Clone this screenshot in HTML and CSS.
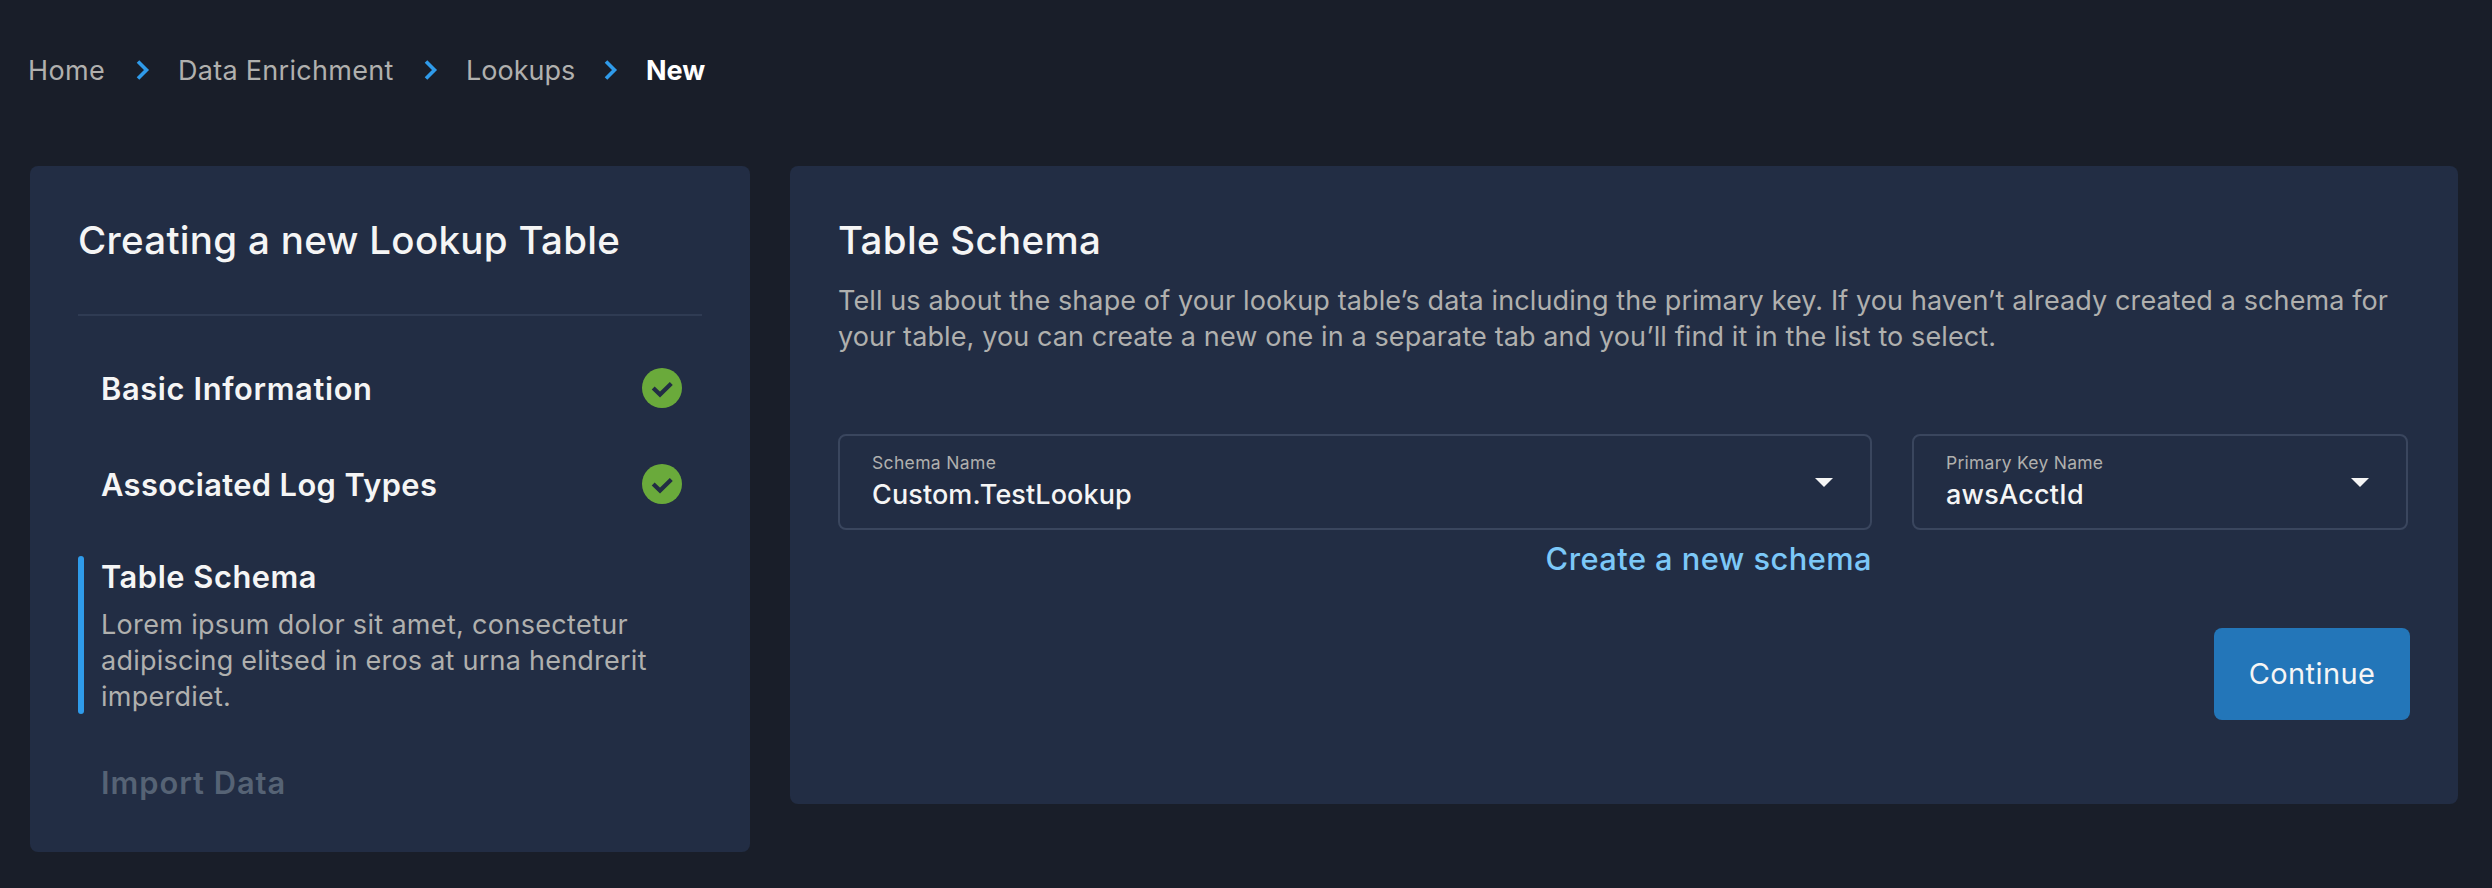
FILE: index.html
```
<!DOCTYPE html>
<html lang="en">
<head>
<meta charset="utf-8">
<title>New Lookup Table</title>
<link rel="stylesheet" href="styles.css">
</head>
<body>
<nav class="breadcrumbs">
  <a class="crumb crumb-home">Home</a>
  <svg class="chevron" viewBox="0 0 14 20"><path d="M2 1.500 10.500 10 2 18.500"/></svg>
  <a class="crumb crumb-enrichment">Data Enrichment</a>
  <svg class="chevron" viewBox="0 0 14 20"><path d="M2 1.500 10.500 10 2 18.500"/></svg>
  <a class="crumb crumb-lookups">Lookups</a>
  <svg class="chevron" viewBox="0 0 14 20"><path d="M2 1.500 10.500 10 2 18.500"/></svg>
  <span class="crumb crumb-current">New</span>
</nav>
<main class="layout">
  <aside class="card wizard">
    <h1 class="title wizard-title">Creating a new Lookup Table</h1>
    <ol class="steps">
      <li class="step done"><span class="step-name basic">Basic Information</span>
        <svg class="check" viewBox="0 0 40 40"><circle cx="20" cy="20" r="20"/><path d="M11.200 20 18 26.500 29.300 15.500"/></svg></li>
      <li class="step done"><span class="step-name assoc">Associated Log Types</span>
        <svg class="check" viewBox="0 0 40 40"><circle cx="20" cy="20" r="20"/><path d="M11.200 20 18 26.500 29.300 15.500"/></svg></li>
      <li class="step active">
        <span class="step-name schema">Table Schema</span>
        <p class="body step-text"><span class="wide">Lorem ipsum dolor sit amet, consectetur</span><br>adipiscing elitsed in eros at urna hendrerit<br>imperdiet.</p>
      </li>
      <li class="step pending"><span class="step-name import">Import Data</span></li>
    </ol>
  </aside>
  <section class="card panel">
    <h2 class="title panel-title">Table Schema</h2>
    <p class="body panel-text">Tell us about the shape of your lookup table’s data including the primary key. If you haven’t already created a schema for<br>your table, you can create a new one in a separate tab and you’ll find it in the list to select.</p>
    <div class="fields">
      <div class="field-group">
        <div class="select">
          <div class="select-text"><span class="label">Schema Name</span><span class="value">Custom.TestLookup</span></div>
          <svg class="caret" viewBox="0 0 18 9"><path d="M0 0H18L9 9Z"/></svg>
        </div>
        <a class="link">Create a new schema</a>
      </div>
      <div class="select key-select">
        <div class="select-text"><span class="label key-label">Primary Key Name</span><span class="value key-value">awsAcctId</span></div>
        <svg class="caret" viewBox="0 0 18 9"><path d="M0 0H18L9 9Z"/></svg>
      </div>
    </div>
    <button class="continue">Continue</button>
  </section>
</main>
</body>
</html>
```
FILE: styles.css
```
* { box-sizing: border-box; }
body {
  margin: 0;
  min-height: 888px;
  background: #191e29;
  color: #f5f5f5;
  font-family: Inter, Lato, sans-serif;
}
h1, h2, p, ol { margin: 0; padding: 0; }
.breadcrumbs {
  display: flex;
  align-items: center;
  height: 166px;
  padding: 0 0 26px 28px;
}
.crumb { padding-top: 2px; font-size: 27px; line-height: 36px; color: #b0b0ae; white-space: nowrap; }
.crumb-home { width: 108px; letter-spacing: 0.35px; }
.crumb-enrichment { width: 246px; letter-spacing: 0.29px; }
.crumb-lookups { width: 138px; }
.crumb-current { color: #fff; font-weight: 700; }
.chevron { flex: none; width: 14px; height: 20px; margin-right: 28px; fill: none; stroke: #2f9bea; stroke-width: 3.6; }
.layout { display: flex; align-items: flex-start; gap: 40px; padding-left: 30px; }
.card { background: #222d44; border-radius: 8px; }
.wizard { width: 720px; height: 686px; padding: 48px 48px 0; }
.title { font-size: 38.5px; line-height: 52px; font-weight: 500; white-space: nowrap; letter-spacing: 0.3px; }
.wizard-title { height: 102px; margin-left: 0; border-bottom: 2px solid #2f3b53; }
.steps { list-style: none; padding-top: 52px; }
.done { display: flex; align-items: center; justify-content: space-between; height: 40px; margin-bottom: 56px; padding: 0 20px 0 23px; }
.step-name { padding-top: 2px; font-size: 30.8px; line-height: 40px; font-weight: 600; }
.basic { letter-spacing: 0.65px; }
.assoc { letter-spacing: 0.4px; }
.schema { display: block; padding-top: 1px; letter-spacing: 0.55px; }
.import { letter-spacing: 1px; }
.check { width: 40px; height: 40px; fill: #6aaa3b; }
.check path { fill: none; stroke: #222d44; stroke-width: 4.2; }
.active { position: relative; height: 158px; margin-top: -4px; padding-left: 23px; }
.active::before { content: ""; position: absolute; left: 0; top: 0; width: 6px; height: 158px; border-radius: 3px; background: #2f9bea; }
.body { font-size: 27px; line-height: 36px; color: #b0b0ae; white-space: nowrap; letter-spacing: 0.24px; }
.wide { letter-spacing: 0.33px; }
.step-text { padding-top: 10px; }
.pending { margin-top: 49px; padding-left: 23px; color: #566375; }
.panel { width: 1668px; height: 638px; padding: 48px 48px 0; display: flex; flex-direction: column; }
.panel-text { padding-top: 17px; height: 168px; letter-spacing: 0.11px; }
.fields { display: flex; gap: 40px; height: 194px; }
.field-group { display: flex; flex-direction: column; width: 1034px; }
.select { display: flex; align-items: center; justify-content: space-between; height: 96px; padding: 0 37px 0 32px; border: 2px solid #3a465e; border-radius: 8px; }
.key-select { width: 496px; }
.select-text { display: flex; flex-direction: column; }
.label { font-size: 17.5px; line-height: 22px; color: #b0b0ae; letter-spacing: 0.35px; }
.key-label { letter-spacing: 0.25px; }
.value { padding-top: 3px; font-size: 27px; line-height: 36px; font-weight: 500; letter-spacing: 0.1px; }
.key-value { letter-spacing: 0.25px; }
.caret { width: 18px; height: 9px; fill: #f5f5f5; }
.link { align-self: flex-end; margin-top: 9px; font-size: 30.8px; line-height: 40px; font-weight: 500; letter-spacing: 0.46px; color: #7cc8f8; }
.continue { align-self: flex-end; width: 196px; height: 92px; border: 0; border-radius: 8px; background: #2376b9; color: #f5f5f5; font: 400 29px/40px Inter, Lato, sans-serif; letter-spacing: 0.4px; }
```
